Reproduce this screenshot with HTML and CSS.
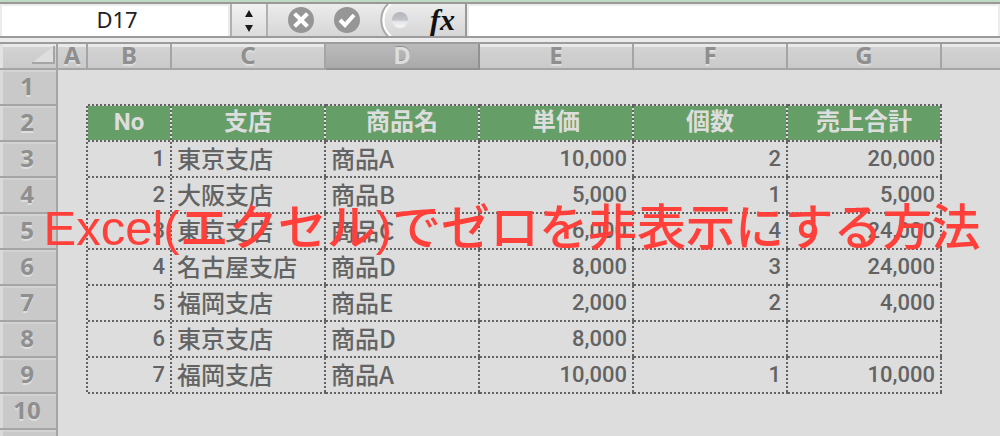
FILE: index.html
```html
<!DOCTYPE html>
<html lang="ja">
<head>
<meta charset="utf-8">
<title>Excel(エクセル)でゼロを非表示にする方法</title>
<link rel="stylesheet" href="styles.css">
</head>
<body>
<main class="window">
  <div class="formula-bar">
    <input class="name-box" type="text" value="D17" aria-label="名前ボックス">
    <button class="stepper" type="button" aria-label="名前の一覧">
      <svg width="12" height="24" viewBox="0 0 12 24"><path d="M6 1 10 8H2ZM6 23 2 16h8Z" fill="#1c1c1c"/></svg>
    </button>
    <div class="tools">
      <button class="tool" type="button" aria-label="キャンセル">
        <svg width="26" height="26" viewBox="0 0 26 26"><circle cx="13" cy="13" r="13" fill="#969696"/><path d="m8 8 10 10M18 8 8 18" stroke="#fff" stroke-width="4" stroke-linecap="square"/></svg>
      </button>
      <button class="tool" type="button" aria-label="入力">
        <svg width="26" height="26" viewBox="0 0 26 26"><circle cx="13" cy="13" r="13" fill="#969696"/><path d="m6 13 5 5 9-10" fill="none" stroke="#fff" stroke-width="4"/></svg>
      </button>
      <button class="tool" type="button" aria-label="数式ビルダー">
        <svg width="30" height="32" viewBox="0 0 30 32">
          <defs><linearGradient id="orb" x1="0" y1="0" x2="0" y2="1"><stop offset="0" stop-color="#b4b5bb"/><stop offset=".5" stop-color="#c3c4c9"/><stop offset=".6" stop-color="#e4e5ea"/><stop offset="1" stop-color="#f6f6f8"/></linearGradient></defs>
          <path d="M8 0C-1 8-1 24 8 32" fill="none" stroke="#aaa" stroke-width="2"/>
          <path d="M11 0C1 8 1 24 11 32" fill="none" stroke="#fff" stroke-width="2"/>
          <circle cx="20" cy="16" r="8" fill="url(#orb)"/>
        </svg>
      </button>
      <button class="tool fx" type="button">fx</button>
    </div>
    <input class="formula" type="text" aria-label="数式">
  </div>
  <div class="sheet">
    <table class="grid">
      <colgroup><col class="c-row"><col class="c-a"><col class="c-b"><col class="c-data"><col class="c-data"><col class="c-data"><col class="c-data"><col class="c-data"><col></colgroup>
      <thead>
        <tr>
          <th class="corner"><svg width="24" height="18" viewBox="0 0 24 18"><path d="M0 17 22 0v17Z" fill="#dedede"/><path d="M0 17h22V0" fill="none" stroke="#a5a5a5" stroke-width="2"/></svg></th>
          <th>A</th><th>B</th><th>C</th><th class="active">D</th><th>E</th><th>F</th><th>G</th><th class="rest"></th>
        </tr>
      </thead>
      <tbody>
        <tr><th>1</th><td></td><td class="above"></td><td class="above"></td><td class="above"></td><td class="above"></td><td class="above"></td><td class="above"></td><td></td></tr>
        <tr class="titles"><th>2</th><td class="before"></td><td class="head">No</td><td class="head">支店</td><td class="head">商品名</td><td class="head">単価</td><td class="head">個数</td><td class="head">売上合計</td><td></td></tr>
        <tr><th>3</th><td class="before"></td><td class="cell num">1</td><td class="cell">東京支店</td><td class="cell">商品A</td><td class="cell num">10,000</td><td class="cell num">2</td><td class="cell num">20,000</td><td></td></tr>
        <tr><th>4</th><td class="before"></td><td class="cell num">2</td><td class="cell">大阪支店</td><td class="cell">商品B</td><td class="cell num">5,000</td><td class="cell num">1</td><td class="cell num">5,000</td><td></td></tr>
        <tr><th>5</th><td class="before"></td><td class="cell num">3</td><td class="cell">東京支店</td><td class="cell">商品C</td><td class="cell num">6,000</td><td class="cell num">4</td><td class="cell num">24,000</td><td></td></tr>
        <tr><th>6</th><td class="before"></td><td class="cell num">4</td><td class="cell">名古屋支店</td><td class="cell">商品D</td><td class="cell num">8,000</td><td class="cell num">3</td><td class="cell num">24,000</td><td></td></tr>
        <tr><th>7</th><td class="before"></td><td class="cell num">5</td><td class="cell">福岡支店</td><td class="cell">商品E</td><td class="cell num">2,000</td><td class="cell num">2</td><td class="cell num">4,000</td><td></td></tr>
        <tr><th>8</th><td class="before"></td><td class="cell num">6</td><td class="cell">東京支店</td><td class="cell">商品D</td><td class="cell num">8,000</td><td class="cell num"></td><td class="cell num"></td><td></td></tr>
        <tr><th>9</th><td class="before"></td><td class="cell num">7</td><td class="cell">福岡支店</td><td class="cell">商品A</td><td class="cell num">10,000</td><td class="cell num">1</td><td class="cell num">10,000</td><td></td></tr>
        <tr><th>10</th><td></td><td></td><td></td><td></td><td></td><td></td><td></td><td></td></tr>
        <tr><th></th><td></td><td></td><td></td><td></td><td></td><td></td><td></td><td></td></tr>
      </tbody>
    </table>
    <h1 class="caption">Excel(エクセル)でゼロを非表示にする方法</h1>
  </div>
</main>
</body>
</html>
```
FILE: styles.css
```css
* { box-sizing: border-box; }

body {
  margin: 0;
  background: #ddd;
}

.window {
  height: 100vh;
  overflow: hidden;
  display: flex;
  flex-direction: column;
}

/* Formula bar */
.formula-bar {
  flex: none;
  display: flex;
  height: 38px;
  border-top: 2px solid #bddac5;
  border-bottom: 2px solid #9b9b9b;
  background: linear-gradient(#999 2px, #ececec 2px, #d6d6d6);
  padding-top: 2px;
}

.name-box,
.formula {
  border: 2px solid #ececec;
  border-bottom: 0;
  background: #fff;
  padding: 0 8px 4px;
  border-radius: 0;
  font: 22px "Noto Sans", sans-serif;
  color: #222;
}

.name-box {
  width: 230px;
  padding-right: 4px;
  text-align: center;
}

.stepper {
  width: 38px;
  border: 0;
  border-left: 2px solid #b0b0b0;
  border-right: 2px solid #b0b0b0;
  background: linear-gradient(#f2f2f2, #dcdcdc);
  padding: 2px 0 0;
  display: grid;
  place-items: center;
}

.tools {
  width: 199px;
  display: flex;
  align-items: center;
  gap: 20px;
  padding-left: 20px;
  border-right: 2px solid #999;
}

.tool {
  flex: none;
  border: 0;
  background: none;
  padding: 0;
  display: grid;
}

.fx {
  font: italic bold 30px/32px "Liberation Serif", serif;
  color: #111;
}

.formula {
  flex: 1;
  min-width: 0;
}

/* Sheet */
.sheet {
  flex: 1;
  min-height: 0;
  position: relative;
  border-top: 2px solid #9c9c9c;
  margin-top: 4px;
  box-shadow: 0 -4px #ececec;
}

.grid {
  width: 100%;
  table-layout: fixed;
  border-collapse: separate;
  border-spacing: 0;
}

.c-row { width: 58px; }
.c-a { width: 30px; }
.c-b { width: 84px; }
.c-data { width: 154px; }

.grid th,
.grid td {
  padding: 0;
  height: 36px;
  white-space: nowrap;
}

.grid th {
  font: bold 24px/24px "Noto Sans", sans-serif;
  color: #8f8f8f;
  text-shadow: 0 2px #dedede;
  border-right: 2px solid #a5a5a5;
  border-bottom: 2px solid #a5a5a5;
}

.grid thead th {
  height: 26px;
  line-height: 22px;
  padding-bottom: 2px;
  background: linear-gradient(#e9e9e9 3px, #d3d3d3 3px, #cacaca);
}

.grid thead .active {
  color: #ddd;
  text-shadow: 0 -1px #919191;
  background: linear-gradient(#bbb, #a9a9a9);
  border-color: #919191;
}

.grid thead .rest { border-right: 0; }

.grid thead .corner {
  text-align: right;
  background: linear-gradient(90deg, #e2e2e2 3px, transparent 3px), linear-gradient(#e9e9e9 3px, #d3d3d3 3px, #cacaca);
}

.corner svg {
  display: block;
  margin-left: auto;
}

.grid tbody th {
  padding: 0 2px 2px 0;
  background: linear-gradient(90deg, #dadada 3px, transparent 3px), linear-gradient(#d3d3d3 2px, #c9c9c9 2px);
}

/* Square-dotted rules on the bottom and right edges of a cell */
.above,
.before,
.cell,
.head {
  --across: repeating-linear-gradient(90deg, #636363 0 2px, transparent 2px 4px) 0 100% / 100% 2px no-repeat;
  --down: repeating-linear-gradient(#636363 0 2px, transparent 2px 4px) 100% 0 / 2px 100% no-repeat;
}

.grid .above { background: var(--across); }
.grid .before { background: var(--down); }

.cell {
  background: var(--across), var(--down);
  font: 500 24px/30px "Noto Sans CJK JP", sans-serif;
  color: #636363;
}

.grid .cell,
.grid .head { padding: 0 7px 5px 5px; }

.num {
  text-align: right;
  font: 500 22px/30px Roboto, sans-serif;
}

.grid .num { padding: 0 7px 2px 5px; }

.head {
  background: var(--across), var(--down), linear-gradient(#659e67, #659e67) 0 0 / calc(100% - 2px) calc(100% - 2px) no-repeat;
  font: bold 24px/30px Roboto, "Noto Sans CJK JP", sans-serif;
  color: #ddd;
  text-align: center;
}

/* Caption lying over the sheet */
.caption {
  position: absolute;
  top: 148px;
  left: 0;
  right: 0;
  margin: 0;
  padding-left: 24px;
  font: 500 49px/72px "Liberation Sans", "Noto Sans CJK JP", sans-serif;
  color: #ff3f3a;
  text-align: center;
  white-space: nowrap;
}
```
